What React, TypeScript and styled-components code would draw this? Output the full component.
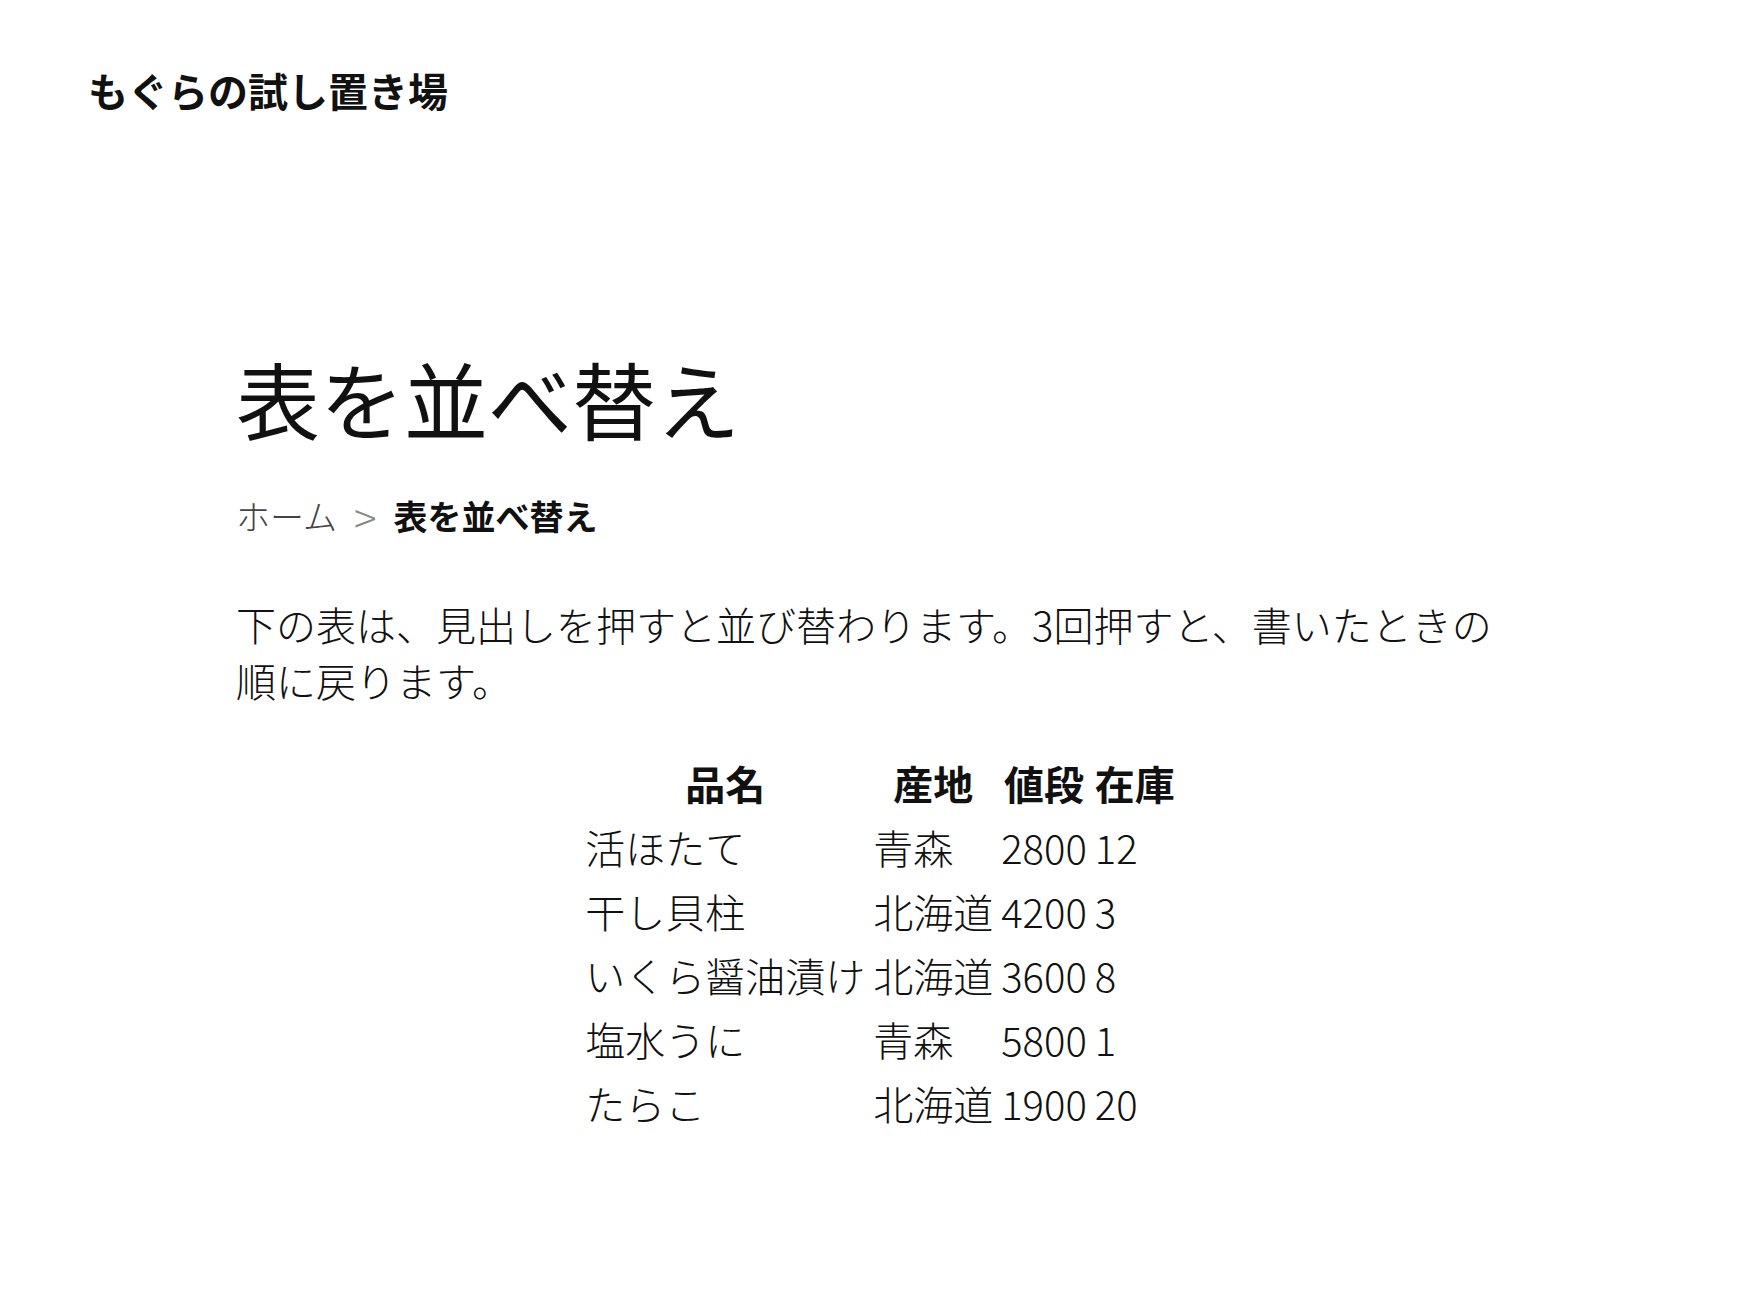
import React from "react";
import styled, { createGlobalStyle } from "styled-components";

const Global = createGlobalStyle`
  html, body { margin: 0; padding: 0; background: #fff; }
  body {
    font-family: "Noto Sans CJK JP", "Noto Sans", sans-serif;
    font-size: 40px;
    line-height: 1.4;
    color: #111;
    font-weight: 300;
  }
`;

const Header = styled.header`
  padding: 62px 88px 0;
`;

const SiteTitle = styled.div`
  font-size: 40px;
  font-weight: 700;
  line-height: 56px;
  color: #111;
`;

const Main = styled.main`
  max-width: 1288px;
  margin: 0 auto;
  padding-top: 224px;
`;

const Title = styled.h1`
  margin: 0;
  font-size: 84px;
  font-weight: 400;
  line-height: 112px;
`;

const Crumbs = styled.nav`
  margin-top: 39px;
  font-size: 34px;
  line-height: 45px;
  display: flex;
  align-items: center;
`;

const CrumbLink = styled.span`
  color: #444;
  font-weight: 300;
`;

const Sep = styled.span`
  color: #888;
  font-weight: 300;
  font-size: 42px;
  line-height: 45px;
  margin: 0 17px 0 17px;
`;

const Current = styled.span`
  font-weight: 700;
  color: #111;
`;

const Para = styled.p`
  margin: 58px 0 0;
  font-size: 40px;
  line-height: 56px;
`;

const Table = styled.table`
  margin: 41px auto 0;
  border-spacing: 4px;
  font-size: 40px;
  line-height: 56px;
`;

const Th = styled.th`
  padding: 2px;
  font-weight: 700;
  text-align: center;
  cursor: pointer;
`;

const Td = styled.td`
  padding: 2px;
  font-weight: 300;
`;

const rows = [
  ["活ほたて", "青森", "2800", "12"],
  ["干し貝柱", "北海道", "4200", "3"],
  ["いくら醤油漬け", "北海道", "3600", "8"],
  ["塩水うに", "青森", "5800", "1"],
  ["たらこ", "北海道", "1900", "20"],
];

export default function App() {
  return (
    <>
      <Global />
      <Header>
        <SiteTitle>もぐらの試し置き場</SiteTitle>
      </Header>
      <Main>
        <Title>表を並べ替え</Title>
        <Crumbs>
          <CrumbLink>ホーム</CrumbLink>
          <Sep>&gt;</Sep>
          <Current>表を並べ替え</Current>
        </Crumbs>
        <Para>
          下の表は、見出しを押すと並び替わります。3回押すと、書いたときの順に戻ります。
        </Para>
        <Table>
          <thead>
            <tr>
              <Th>品名</Th>
              <Th>産地</Th>
              <Th>値段</Th>
              <Th>在庫</Th>
            </tr>
          </thead>
          <tbody>
            {rows.map((r) => (
              <tr key={r[0]}>
                {r.map((c, i) => (
                  <Td key={i}>{c}</Td>
                ))}
              </tr>
            ))}
          </tbody>
        </Table>
      </Main>
    </>
  );
}
